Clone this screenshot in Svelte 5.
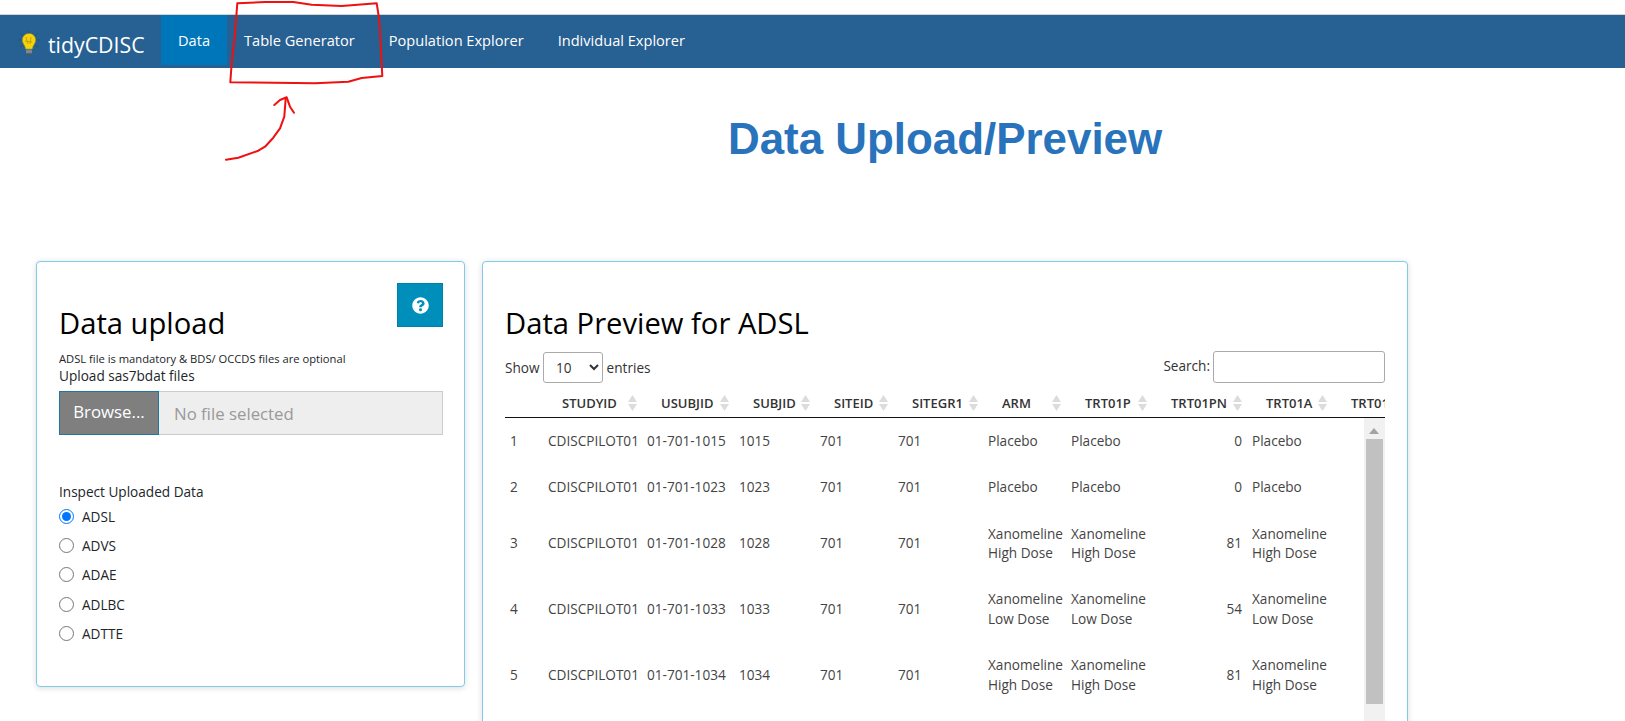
<script>
  const navItems = ['Data', 'Table Generator', 'Population Explorer', 'Individual Explorer'];
  const domains = ['ADSL', 'ADVS', 'ADAE', 'ADLBC', 'ADTTE'];

  const columns = [
    { name: '', width: 38 },
    { name: 'STUDYID', width: 99 },
    { name: 'USUBJID', width: 92 },
    { name: 'SUBJID', width: 81 },
    { name: 'SITEID', width: 78 },
    { name: 'SITEGR1', width: 90 },
    { name: 'ARM', width: 83 },
    { name: 'TRT01P', width: 86 },
    { name: 'TRT01PN', width: 95 },
    { name: 'TRT01A', width: 85 },
    { name: 'TRT01AN', width: 90 }
  ];

  const high = 'Xanomeline High Dose';
  const low = 'Xanomeline Low Dose';
  const rows = [
    ['1015', 'Placebo', 0],
    ['1023', 'Placebo', 0],
    ['1028', high, 81],
    ['1033', low, 54],
    ['1034', high, 81]
  ];
</script>

<div class="page">
  <nav class="navbar">
    <div class="brand">
      <svg width="24" height="28" viewBox="0 0 24 28" aria-hidden="true">
        <g stroke="#1d4568" stroke-width="0.6" opacity="0.8">
          <path d="M1 9h3M20 9h3M3 2l3 3M21 2l-3 3M12 0v2M3 16l3-2M21 16l-3-2" />
        </g>
        <path d="M12 2.5c-4 0-6.6 3-6.6 6.6 0 3.4 2.6 5 3.2 8.9h6.8c.6-3.9 3.2-5.500 3.200-8.900 0-3.600-2.600-6.600-6.600-6.600z" fill="#f4d30c" stroke="#a98f10" stroke-width="0.6" />
        <path d="M9 6l2 7M14 6l-1 7M8 10l7 1" stroke="#b8980c" stroke-width="0.8" fill="none" />
        <rect x="9" y="18.500" width="6" height="4" rx="1" fill="#7d8790" />
        <rect x="10" y="22.500" width="4" height="2" rx="1" fill="#4c5660" />
      </svg>
      <span>tidyCDISC</span>
    </div>
    <ul class="tabs">
      {#each navItems as item, i}
        <li class:active={i === 0}>{item}</li>
      {/each}
    </ul>
  </nav>

  <h1>Data Upload/Preview</h1>

  <main class="cards">
    <section class="card upload">
      <button type="button" class="help" aria-label="Help">
        <svg width="17" height="17" viewBox="0 0 512 512" aria-hidden="true">
          <path fill="#fff" d="M504 256c0 136.997-111.043 248-248 248S8 392.997 8 256C8 119.083 119.043 8 256 8s248 111.083 248 248zM262.655 90c-54.497 0-89.255 22.957-116.549 63.758-3.536 5.286-2.353 12.415 2.715 16.258l34.699 26.31c5.205 3.947 12.621 3.008 16.665-2.122 17.864-22.658 30.113-35.797 57.303-35.797 20.429 0 45.698 13.148 45.698 32.958 0 14.976-12.363 22.667-32.534 33.976C247.128 238.528 216 254.941 216 296v4c0 6.627 5.373 12 12 12h56c6.627 0 12-5.373 12-12v-1.333c0-28.462 83.186-29.647 83.186-106.667 0-58.002-60.165-102-116.531-102zM256 338c-25.365 0-46 20.635-46 46 0 25.364 20.635 46 46 46s46-20.636 46-46c0-25.365-20.635-46-46-46z" />
        </svg>
      </button>
      <h2>Data upload</h2>
      <p class="note">ADSL file is mandatory &amp; BDS/ OCCDS files are optional</p>
      <div class="field-label">Upload sas7bdat files</div>
      <div class="file-input">
        <span class="browse">Browse...</span>
        <span class="file-name">No file selected</span>
      </div>
      <div class="radio-title">Inspect Uploaded Data</div>
      <div class="radios">
        {#each domains as d, i}
          <label><input type="radio" name="domain" checked={i === 0} />{d}</label>
        {/each}
      </div>
    </section>

    <section class="card preview">
      <h2>Data Preview for ADSL</h2>
      <div class="controls">
        <label class="length">
          Show
          <select><option>10</option></select>
          entries
        </label>
        <label class="search">Search:<input type="text" /></label>
      </div>

      <div class="head-clip">
        <table>
          <colgroup>
            {#each columns as c}<col style="width:{c.width}px" />{/each}
          </colgroup>
          <thead>
            <tr>
              {#each columns as c}
                <th>
                  {c.name}
                  <svg class="sort" width="9" height="16" viewBox="0 0 9 16" aria-hidden="true">
                    <path d="M4.500 0L9 7H0z" fill="#dcdcdc" />
                    <path d="M0 9h9l-4.500 7z" fill="#dcdcdc" />
                  </svg>
                </th>
              {/each}
            </tr>
          </thead>
        </table>
      </div>

      <div class="body-scroll">
        <div class="body-clip">
          <table>
            <colgroup>
              {#each columns as c}<col style="width:{c.width}px" />{/each}
            </colgroup>
            <tbody>
              {#each rows as r, i}
                <tr>
                  <td>{i + 1}</td>
                  <td>CDISCPILOT01</td>
                  <td>01-701-{r[0]}</td>
                  <td>{r[0]}</td>
                  <td>701</td>
                  <td>701</td>
                  <td>{r[1]}</td>
                  <td>{r[1]}</td>
                  <td class="num">{r[2]}</td>
                  <td>{r[1]}</td>
                  <td></td>
                </tr>
              {/each}
            </tbody>
          </table>
        </div>
        <div class="scrollbar">
          <svg class="arrow" width="10" height="6" viewBox="0 0 10 6" aria-hidden="true">
            <path d="M5 0l5 6H0z" fill="#a3a3a3" />
          </svg>
          <div class="thumb"></div>
        </div>
      </div>
    </section>
  </main>

  <svg class="scribble" width="400" height="170" viewBox="0 0 400 170" aria-hidden="true">
    <path d="M237.300 3.300L265 2L293.300 2L311.700 4.700L341.700 6L376.700 3.300L379.300 20L382.300 76L361.700 78L348.300 81.700L315 83.300L230.300 82.300L231.700 63.300L235 33.300L237.300 3.300" />
    <path d="M226 159.700L238.300 157.700L258.300 150.700L265 146.700L273.300 137.700L280 128.300L284.300 116.700L285.700 98.300" />
    <path d="M274.300 105L280 100L286.700 97.300L290 106.700L294 112.700" />
  </svg>
</div>

<style>
  :global(body) {
    background: #fff;
  }

  .page {
    position: relative;
    height: 721px;
    overflow: hidden;
    padding-top: 14px;
    box-sizing: border-box;
    font-family: 'Open Sans', sans-serif;
    font-size: 13.6px;
    color: #212529;
  }

  .navbar {
    display: flex;
    height: 54px;
    box-sizing: border-box;
    border-top: 1px solid #d4d4d4;
    background: #276092;
    color: #fff;
  }

  .brand {
    display: flex;
    align-items: flex-start;
    width: 161px;
    padding: 16px 0 0 17px;
    box-sizing: border-box;
    font-size: 21.3px;
    line-height: 27px;
    gap: 7px;
  }

  .brand svg {
    flex: none;
  }

  .tabs {
    display: flex;
    list-style: none;
    margin: 0;
    padding: 0;
  }

  .tabs li {
    height: 50px;
    padding: 0 17px;
    line-height: 50px;
    font-size: 14.6px;
  }

  .tabs li.active {
    background: #0076ba;
  }

  h1 {
    margin: 0;
    padding: 46px 0 0 728px;
    height: 148px;
    box-sizing: border-box;
    font-family: 'Liberation Sans', Arial, sans-serif;
    font-size: 43.9px;
    line-height: 50px;
    font-weight: 700;
    color: #2873bb;
  }

  .cards {
    display: flex;
    align-items: flex-start;
    gap: 17px;
    padding: 45px 0 0 36px;
  }

  .card {
    position: relative;
    box-sizing: border-box;
    background: #fff;
    border: 1px solid #7fcbe8;
    border-radius: 4px;
    box-shadow: 0 1px 6px rgba(0, 0, 0, 0.14);
    padding: 0 22px;
  }

  .card h2 {
    margin: 0;
    padding-top: 41px;
    font-size: 29.2px;
    line-height: 40px;
    font-weight: 400;
    color: #000;
  }

  .upload {
    width: 429px;
    height: 426px;
    padding-right: 21px;
  }

  .help {
    position: absolute;
    top: 21px;
    right: 21px;
    width: 46px;
    height: 44px;
    border: 1px solid #0081a8;
    background: #008fbb;
    padding: 0;
    display: flex;
    align-items: center;
    justify-content: center;
  }

  .note {
    margin: 8px 0 0;
    font-size: 11.2px;
    line-height: 15px;
  }

  .field-label {
    line-height: 19px;
  }

  .file-input {
    display: flex;
    height: 44px;
    margin-top: 6px;
    box-sizing: border-box;
    font-size: 16.8px;
  }

  .browse {
    width: 100px;
    flex: none;
    box-sizing: border-box;
    background: #7f7f7f;
    border: 1px solid #1a7a9c;
    color: #fff;
    line-height: 40px;
    text-align: center;
  }

  .file-name {
    flex: 1;
    background: #eee;
    border: 1px solid #ccc;
    border-left: none;
    color: #999;
    padding-left: 15px;
    line-height: 43px;
  }

  .radio-title {
    margin-top: 47px;
    line-height: 19px;
  }

  .radios {
    display: flex;
    flex-direction: column;
    gap: 10.2px;
    margin-top: 6px;
  }

  .radios label {
    display: flex;
    align-items: center;
    gap: 8px;
    height: 19px;
  }

  .radios input {
    width: 15px;
    height: 15px;
    margin: 0;
  }

  .preview {
    width: 926px;
    height: 600px;
  }

  .controls {
    display: flex;
    justify-content: space-between;
    align-items: center;
    margin-top: 8px;
    color: #333;
  }

  .length select {
    width: 60px;
    height: 31px;
    margin: 0;
    padding-left: 8px;
    font: inherit;
    background: #fff;
    border: 1px solid #aaa;
    border-radius: 3px;
    color: #333;
  }

  .search input {
    width: 172px;
    height: 32px;
    margin-left: 3px;
    box-sizing: border-box;
    border: 1px solid #aaa;
    border-radius: 3px;
    vertical-align: middle;
  }

  table {
    table-layout: fixed;
    border-collapse: collapse;
    width: 917px;
  }

  .head-clip {
    width: 880px;
    overflow: hidden;
    border-bottom: 1px solid #111;
    margin-top: 6px;
  }

  th {
    position: relative;
    height: 28px;
    padding: 0 0 0 19px;
    box-sizing: border-box;
    text-align: left;
    font-size: 13px;
    font-weight: 600;
    line-height: 28px;
    white-space: nowrap;
    color: #333;
  }

  .sort {
    position: absolute;
    right: 5px;
    top: 6px;
  }

  th:first-child .sort,
  th:last-child .sort {
    display: none;
  }

  .body-scroll {
    display: flex;
    width: 880px;
  }

  .body-clip {
    width: 859px;
    overflow: hidden;
  }

  td {
    padding: 13.3px 5px;
    font-size: 13.6px;
    line-height: 19.6px;
    color: #444;
    vertical-align: middle;
  }

  td.num {
    text-align: right;
  }

  .scrollbar {
    position: relative;
    flex: none;
    width: 21px;
    height: 304px;
    background: #f1f1f1;
  }

  .arrow {
    position: absolute;
    top: 10px;
    left: 5px;
  }

  .thumb {
    position: absolute;
    top: 21px;
    bottom: 18px;
    left: 2px;
    right: 2px;
    background: #c1c1c1;
  }

  .scribble {
    position: absolute;
    left: 0;
    top: 0;
    pointer-events: none;
  }

  .scribble path {
    fill: none;
    stroke: #f01010;
    stroke-width: 2;
    stroke-linejoin: round;
    stroke-linecap: round;
  }
</style>
